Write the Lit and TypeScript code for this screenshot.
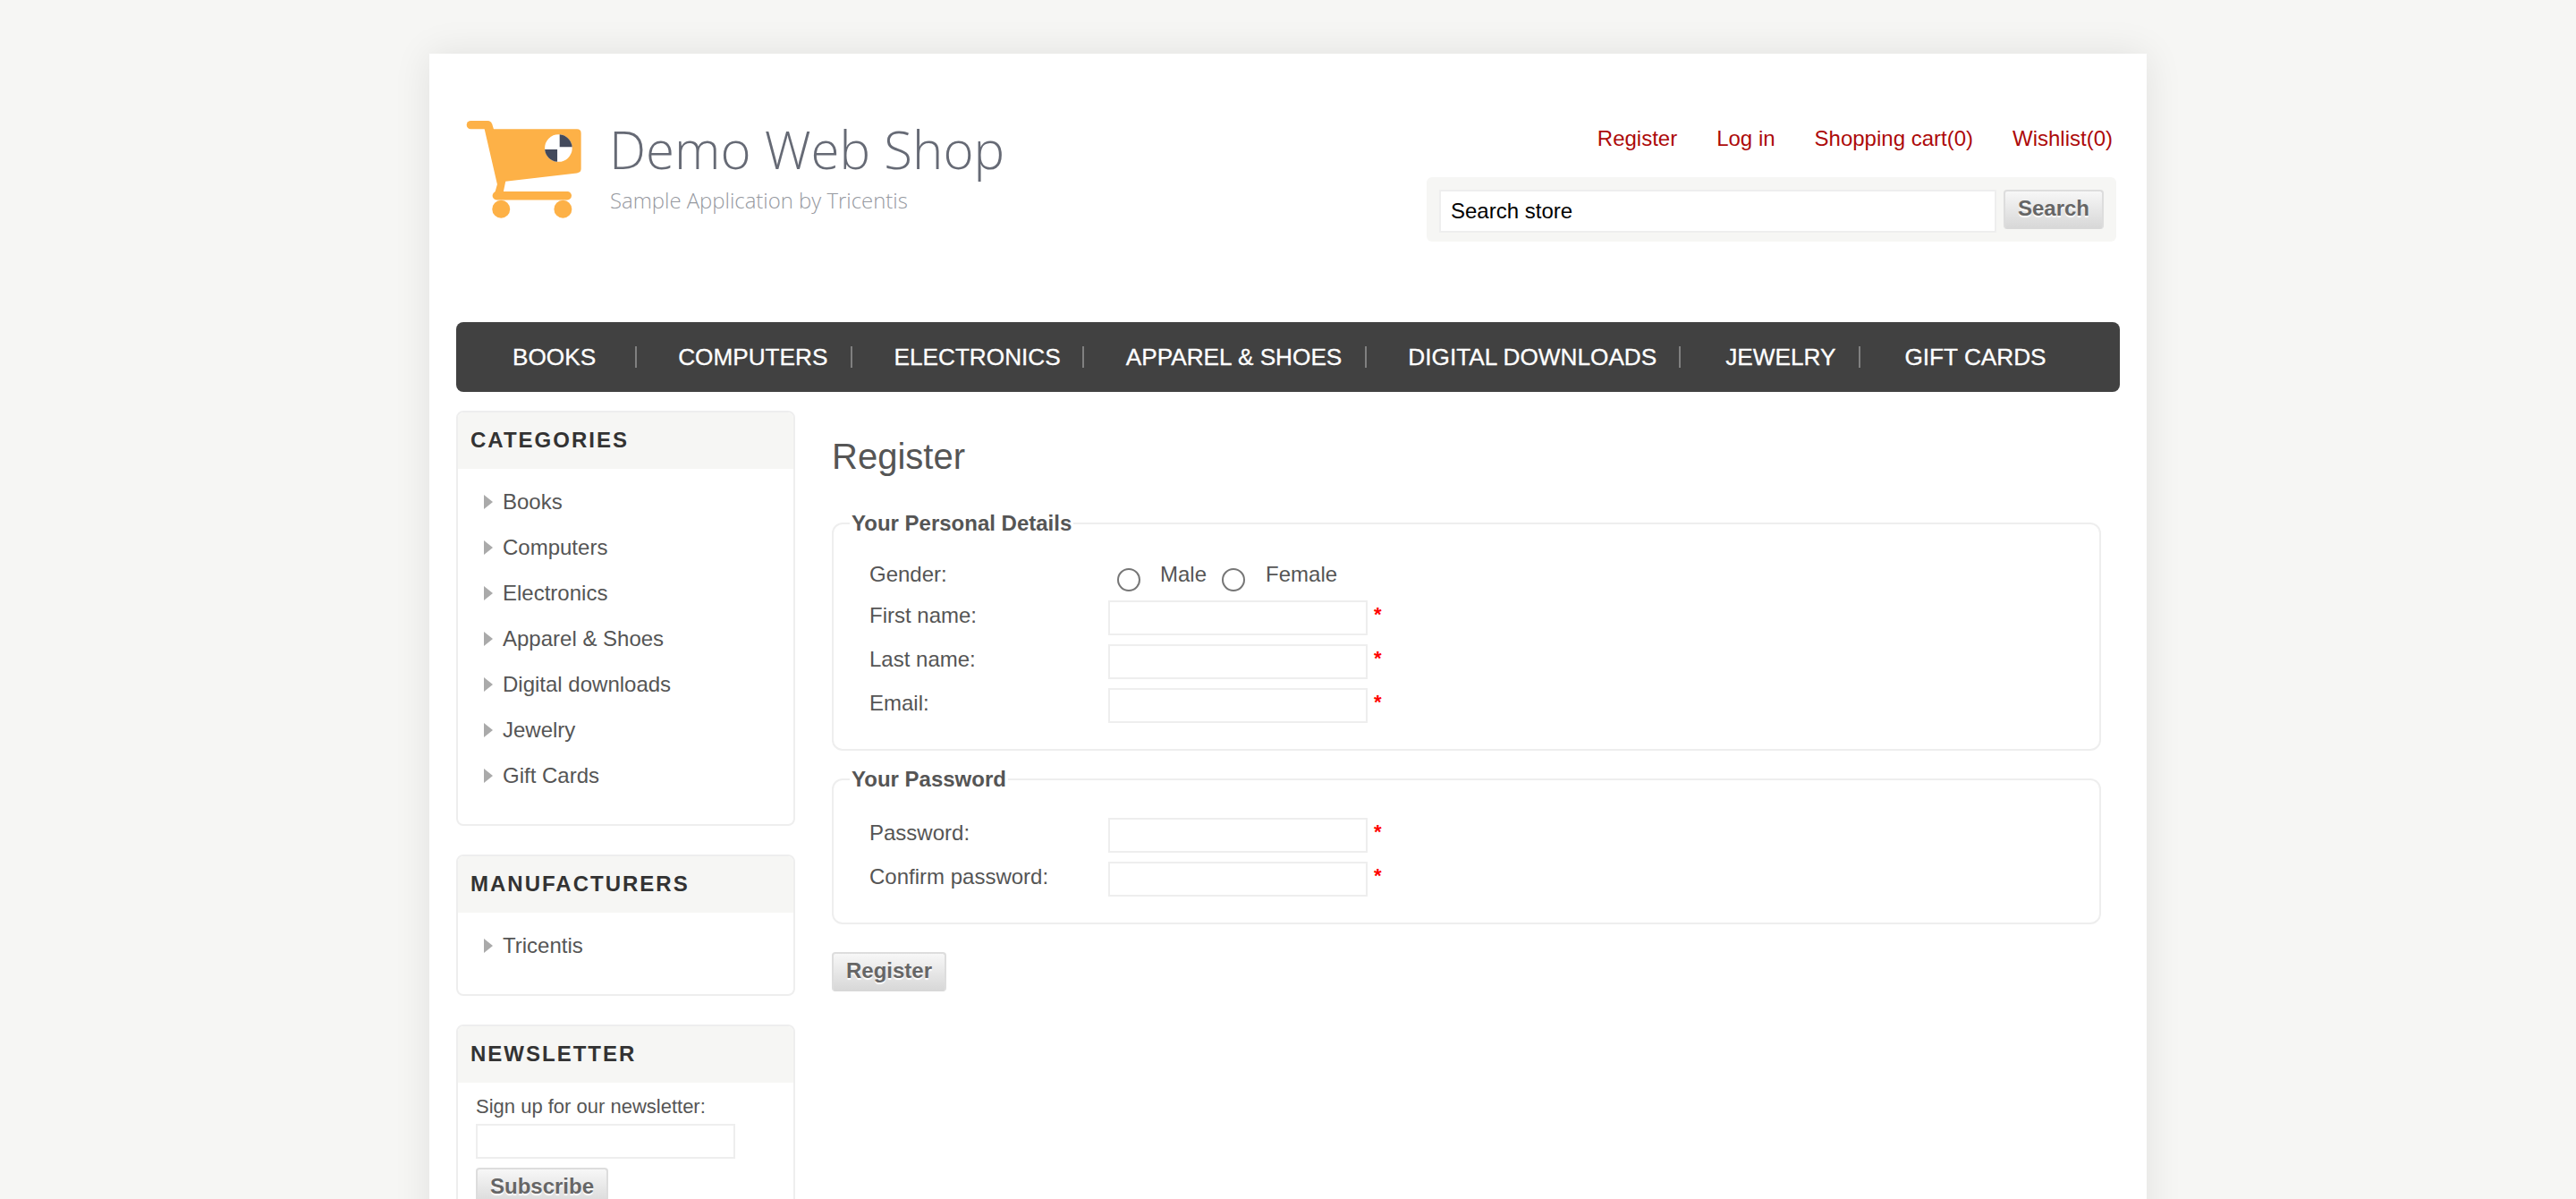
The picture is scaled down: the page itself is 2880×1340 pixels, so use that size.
import { LitElement, html, css } from 'lit'
import { customElement } from 'lit/decorators.js'

const MENU = [
  { label: 'BOOKS', left: 63, right: 44 },
  { label: 'COMPUTERS', left: 46, right: 26 },
  { label: 'ELECTRONICS', left: 46, right: 24 },
  { label: 'APPAREL & SHOES', left: 47, right: 26 },
  { label: 'DIGITAL DOWNLOADS', left: 46, right: 25 },
  { label: 'JEWELRY', left: 50, right: 26 },
  { label: 'GIFT CARDS', left: 49, right: 0 }
]

const CATEGORIES = ['Books', 'Computers', 'Electronics', 'Apparel & Shoes', 'Digital downloads', 'Jewelry', 'Gift Cards']

@customElement('app-root')
export class AppRoot extends LitElement {
  static styles = [
    css`
      :host {
        display: block;
        height: 1340px;
        overflow: hidden;
        background: #f6f6f4;
        font-family: "Liberation Sans", Arial, sans-serif;
        color: #555;
      }

      .master {
        box-sizing: border-box;
        width: 1920px;
        height: 1400px;
        margin: 60px auto 0;
        padding: 0 30px;
        background: #fff;
        box-shadow: 0 0 40px rgba(0, 0, 0, 0.09);
      }

      .header {
        display: flex;
        justify-content: space-between;
        height: 300px;
      }

      .logo {
        display: flex;
        gap: 28px;
        padding: 73px 0 0 10px;
      }

      .logo svg {
        display: block;
        width: 133px;
        height: 113px;
      }

      .logo-text {
        display: flex;
        flex-direction: column;
        font-family: "Open Sans", sans-serif;
        font-weight: 300;
      }

      .logo-name {
        margin-top: -5px;
        font-size: 58.2px;
        line-height: 78px;
        color: #666a75;
      }

      .logo-sub {
        margin-top: 2px;
        margin-left: 1px;
        font-size: 23.9px;
        line-height: 32px;
        color: #96999f;
      }

      .header-right {
        display: flex;
        flex-direction: column;
        align-items: flex-end;
        margin-right: 4px;
        padding-top: 81px;
      }

      .links {
        display: flex;
        gap: 44px;
        margin-right: 4px;
        font-size: 24px;
        line-height: 28px;
        color: #ad0a0a;
      }

      .search {
        display: flex;
        align-items: flex-start;
        gap: 8px;
        box-sizing: border-box;
        width: 771px;
        height: 72px;
        margin-top: 29px;
        padding: 14px;
        background: #f6f6f4;
        border-radius: 6px;
      }

      .search-input {
        box-sizing: border-box;
        width: 623px;
        height: 48px;
        padding-left: 11px;
        background: #fff;
        border: 2px solid #eee;
        font-size: 24px;
        line-height: 44px;
        color: #000;
      }

      .button {
        box-sizing: border-box;
        height: 44px;
        background: linear-gradient(#f7f7f7, #d8d8d8);
        border: 2px solid #ddd;
        border-bottom-color: #d8d8d8;
        border-radius: 4px;
        font-size: 24px;
        font-weight: bold;
        line-height: 38px;
        text-align: center;
        color: #666;
        text-shadow: 0 2px 1px #fff;
      }

      .search .button {
        width: 112px;
      }

      .menu {
        display: flex;
        align-items: center;
        box-sizing: border-box;
        height: 78px;
        margin: 0;
        padding: 0;
        list-style: none;
        background: #414141;
        border-radius: 8px;
        font-size: 26.2px;
        color: #fff;
        -webkit-text-stroke: 0.3px #fff;
      }

      .menu li {
        display: flex;
        align-items: center;
        height: 24px;
        border-right: 2px solid #808080;
        white-space: nowrap;
      }

      .menu li:last-child {
        border-right: 0;
      }

      .columns {
        display: flex;
        gap: 41px;
        margin-top: 21px;
      }

      .side {
        display: flex;
        flex-direction: column;
        gap: 32px;
        flex: none;
        width: 379px;
      }

      .block {
        border: 2px solid #eee;
        border-radius: 8px;
        overflow: hidden;
      }

      .block-title {
        box-sizing: border-box;
        height: 63px;
        padding: 0 14px;
        background: #f6f6f4;
        font-size: 24px;
        font-weight: bold;
        line-height: 62px;
        letter-spacing: 2px;
        color: #333;
      }

      .block ul {
        margin: 0;
        padding: 11px 0 29px 29px;
        list-style: none;
      }

      .block li {
        display: flex;
        align-items: center;
        gap: 11px;
        height: 51px;
        font-size: 24px;
      }

      .block li::before {
        content: "";
        width: 0;
        height: 0;
        border-left: 10px solid #aaa;
        border-top: 8px solid transparent;
        border-bottom: 8px solid transparent;
      }

      .newsletter {
        padding: 13px 20px 0;
        font-size: 22px;
        line-height: 28px;
      }

      .newsletter .field {
        margin-top: 5px;
      }

      .newsletter .button {
        width: 148px;
        margin-top: 10px;
      }

      .field {
        flex: none;
        box-sizing: border-box;
        width: 290px;
        height: 39px;
        background: #fff;
        border: 2px solid #eee;
      }

      .main {
        flex: 1;
        min-width: 0;
      }

      h1 {
        margin: 0;
        padding-top: 28px;
        font-size: 40px;
        font-weight: normal;
        line-height: 46px;
        color: #555;
      }

      fieldset {
        box-sizing: border-box;
        width: 1419px;
        margin: 0;
        padding: 0 0 0 40px;
        border: 2px solid #eee;
        border-radius: 12px;
      }

      legend {
        margin-left: -22px;
        padding: 0 2px;
        font-size: 24px;
        font-weight: bold;
        line-height: 28px;
        color: #555;
      }

      .personal {
        height: 268px;
        margin-top: 38px;
        padding-top: 25px;
      }

      .password {
        height: 176px;
        margin-top: 18px;
        padding-top: 29px;
      }

      .row {
        display: flex;
        height: 39px;
        margin-bottom: 10px;
        font-size: 24px;
      }

      .row label {
        flex: none;
        width: 267px;
        line-height: 34px;
      }

      .required {
        margin-left: 7px;
        padding-top: 2px;
        font-size: 22px;
        font-weight: bold;
        line-height: 28px;
        color: #f00;
      }

      .gender {
        height: 47px;
        margin-bottom: 0;
      }

      .row.gender label {
        line-height: 36px;
      }

      .radio {
        flex: none;
        box-sizing: border-box;
        width: 26px;
        height: 26px;
        margin-top: 11px;
        border: 2px solid #767676;
        border-radius: 50%;
        background: #fff;
      }

      .radio-label {
        line-height: 36px;
      }

      .male-radio {
        margin-left: 10px;
      }

      .male-label {
        margin-left: 22px;
      }

      .female-radio {
        margin-left: 17px;
      }

      .female-label {
        margin-left: 23px;
      }

      .main > .button {
        width: 128px;
        margin-top: 31px;
      }
    `
  ];

  renderCart () {
    return html`
      <svg viewBox="60 70 400 340" aria-hidden="true">
        <rect x="65" y="76" width="85" height="28" rx="14" fill="#fdb147"/>
        <path d="M122 90L150 84L156 104H436Q450 104 450 118V238Q450 250 436 252L196 280L188 318H160L168 290Z" fill="#fdb147"/>
        <rect x="152" y="314" width="266" height="28" rx="14" fill="#fdb147"/>
        <circle cx="181" cy="373" r="30" fill="#fdb147"/>
        <circle cx="389" cy="373" r="30" fill="#fdb147"/>
        <circle cx="374" cy="168" r="46" fill="#fff"/>
        <path d="M378 122A46 46 0 0 1 420 164H378Z" fill="#434a5c"/>
        <path d="M370 214A46 46 0 0 1 328 172H370Z" fill="#434a5c"/>
      </svg>
    `
  }

  renderRow (label: string) {
    return html`
      <div class="row">
        <label>${label}</label>
        <div class="field"></div>
        <span class="required">*</span>
      </div>
    `
  }

  render () {
    return html`
      <div class="master">
        <header class="header">
          <div class="logo">
            ${this.renderCart()}
            <div class="logo-text">
              <span class="logo-name">Demo Web Shop</span>
              <span class="logo-sub">Sample Application by Tricentis</span>
            </div>
          </div>
          <div class="header-right">
            <div class="links">
              <span>Register</span>
              <span>Log in</span>
              <span>Shopping cart(0)</span>
              <span>Wishlist(0)</span>
            </div>
            <div class="search">
              <div class="search-input">Search store</div>
              <div class="button">Search</div>
            </div>
          </div>
        </header>

        <ul class="menu">
          ${MENU.map(item => html`<li style="padding: 0 ${item.right}px 0 ${item.left}px">${item.label}</li>`)}
        </ul>

        <div class="columns">
          <aside class="side">
            <section class="block">
              <div class="block-title">CATEGORIES</div>
              <ul>${CATEGORIES.map(name => html`<li>${name}</li>`)}</ul>
            </section>
            <section class="block">
              <div class="block-title">MANUFACTURERS</div>
              <ul><li>Tricentis</li></ul>
            </section>
            <section class="block">
              <div class="block-title">NEWSLETTER</div>
              <div class="newsletter">
                <div>Sign up for our newsletter:</div>
                <div class="field"></div>
                <div class="button">Subscribe</div>
              </div>
            </section>
          </aside>

          <main class="main">
            <h1>Register</h1>
            <fieldset class="personal">
              <legend>Your Personal Details</legend>
              <div class="row gender">
                <label>Gender:</label>
                <span class="radio male-radio"></span>
                <span class="radio-label male-label">Male</span>
                <span class="radio female-radio"></span>
                <span class="radio-label female-label">Female</span>
              </div>
              ${this.renderRow('First name:')}
              ${this.renderRow('Last name:')}
              ${this.renderRow('Email:')}
            </fieldset>
            <fieldset class="password">
              <legend>Your Password</legend>
              ${this.renderRow('Password:')}
              ${this.renderRow('Confirm password:')}
            </fieldset>
            <div class="button">Register</div>
          </main>
        </div>
      </div>
    `
  }
}
